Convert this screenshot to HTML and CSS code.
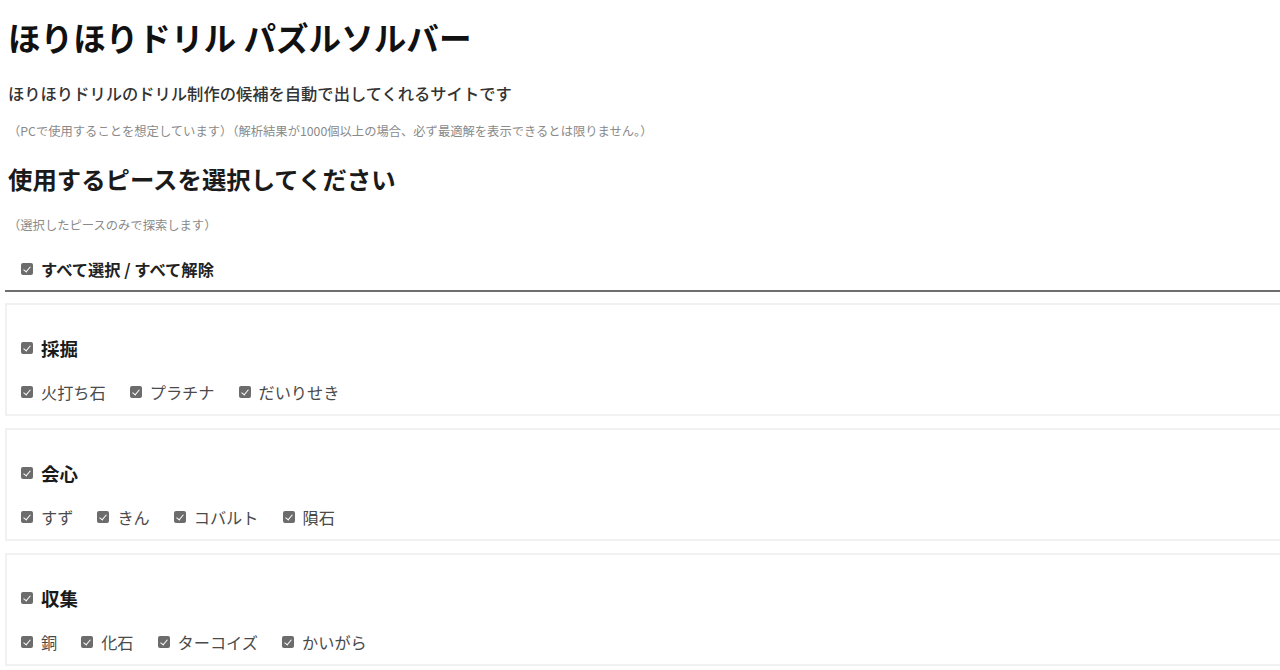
FILE: index.html
```html
<!DOCTYPE html>
<html lang="ja">
<head>
<meta charset="utf-8">
<title>ほりほりドリル パズルソルバー</title>
<link rel="stylesheet" href="styles.css">
</head>
<body>
<div class="page">
  <h1 class="title">ほりほりドリル パズルソルバー</h1>
  <p class="lead">ほりほりドリルのドリル制作の候補を自動で出してくれるサイトです</p>
  <p class="note note-top">（PCで使用することを想定しています）（解析結果が1000個以上の場合、必ず最適解を表示できるとは限りません。）</p>
  <h2 class="section-title">使用するピースを選択してください</h2>
  <p class="note note-section">（選択したピースのみで探索します）</p>
  <label class="select-all"><input type="checkbox" class="cb" checked>すべて選択 / すべて解除</label>

  <div class="groups">
    <div class="group">
      <label class="group-label"><input type="checkbox" class="cb" checked>採掘</label>
      <div class="items">
        <label class="item"><input type="checkbox" class="cb" checked>火打ち石</label>
        <label class="item"><input type="checkbox" class="cb" checked>プラチナ</label>
        <label class="item"><input type="checkbox" class="cb" checked>だいりせき</label>
      </div>
    </div>
    <div class="group">
      <label class="group-label"><input type="checkbox" class="cb" checked>会心</label>
      <div class="items">
        <label class="item"><input type="checkbox" class="cb" checked>すず</label>
        <label class="item"><input type="checkbox" class="cb" checked>きん</label>
        <label class="item"><input type="checkbox" class="cb" checked>コバルト</label>
        <label class="item"><input type="checkbox" class="cb" checked>隕石</label>
      </div>
    </div>
    <div class="group">
      <label class="group-label"><input type="checkbox" class="cb" checked>収集</label>
      <div class="items">
        <label class="item"><input type="checkbox" class="cb" checked>銅</label>
        <label class="item"><input type="checkbox" class="cb" checked>化石</label>
        <label class="item"><input type="checkbox" class="cb" checked>ターコイズ</label>
        <label class="item"><input type="checkbox" class="cb" checked>かいがら</label>
      </div>
    </div>
  </div>
</div>
</body>
</html>
```

FILE: styles.css
```css
html, body {
  margin: 0;
  padding: 0;
  background: #ffffff;
  overflow-x: hidden;
}

body {
  font-family: "Noto Sans CJK JP", "Noto Sans", sans-serif;
  color: #222222;
}

.page {
  width: 1300px;
  padding: 13px 0 0 5px;
}

.title {
  margin: 0;
  padding-left: 3px;
  font-size: 32.6px;
  line-height: 48px;
  font-weight: 700;
  color: #111111;
}

.lead {
  margin: 21px 0 0;
  padding-left: 3px;
  font-size: 16.3px;
  line-height: 22px;
  font-weight: 500;
  color: #333333;
}

.note {
  margin: 0;
  padding-left: 3px;
  font-size: 12.3px;
  line-height: 16px;
  color: #8a8a8a;
}

.note-top {
  margin-top: 19px;
}

.section-title {
  margin: 23px 0 0;
  padding-left: 3px;
  font-size: 24.4px;
  line-height: 34px;
  font-weight: 700;
  color: #1a1a1a;
}

.note-section {
  margin-top: 21px;
}

.cb {
  -webkit-appearance: none;
  appearance: none;
  position: relative;
  flex: none;
  width: 12px;
  height: 12px;
  margin: 0 8px 0 0;
  border-radius: 2px;
  background: #6c6c6c;
}

.cb::after {
  content: "";
  position: absolute;
  left: 4px;
  top: 1.5px;
  width: 3px;
  height: 6px;
  border: solid #ffffff;
  border-width: 0 1.6px 1.6px 0;
  transform: rotate(40deg);
}

.select-all {
  display: flex;
  align-items: center;
  margin-top: 24px;
  padding: 0 0 9px 16px;
  font-size: 16.3px;
  line-height: 24px;
  font-weight: 700;
  color: #222222;
  border-bottom: 2px solid #6e6e6e;
}

.groups {
  display: flex;
  flex-direction: column;
  gap: 12px;
  margin-top: 11px;
}

.group {
  display: flex;
  flex-direction: column;
  gap: 20px;
  padding: 31px 14px 10px;
  border: 2px solid #f1f1f1;
}

.group-label {
  display: flex;
  align-items: center;
  font-size: 18.5px;
  line-height: 24px;
  font-weight: 700;
  color: #1a1a1a;
}

.items {
  display: flex;
  gap: 24px;
}

.item {
  display: flex;
  align-items: center;
  font-size: 16.2px;
  line-height: 24px;
  color: #4a4a4a;
}
```
